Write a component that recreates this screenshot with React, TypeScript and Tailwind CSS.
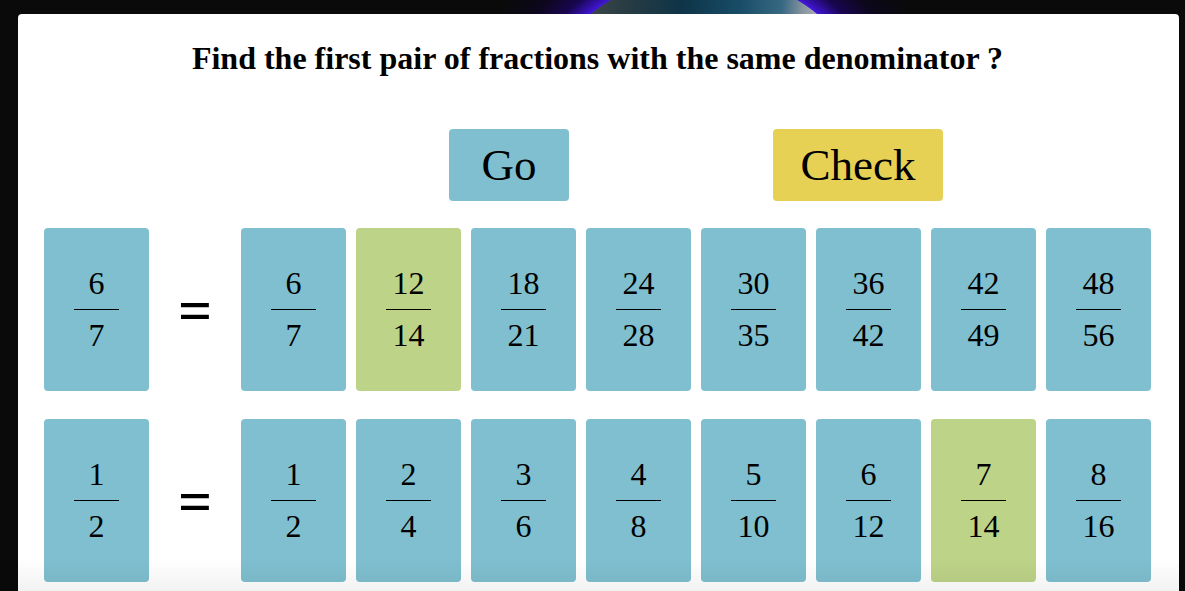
type FractionValue = [number, number];

const rows: { fractions: FractionValue[]; match: number }[] = [
  { fractions: [[6, 7], [12, 14], [18, 21], [24, 28], [30, 35], [36, 42], [42, 49], [48, 56]], match: 1 },
  { fractions: [[1, 2], [2, 4], [3, 6], [4, 8], [5, 10], [6, 12], [7, 14], [8, 16]], match: 6 },
];

function Fraction({ value, highlighted = false }: { value: FractionValue; highlighted?: boolean }) {
  return (
    <div
      className={`flex h-[163px] w-[105px] shrink-0 flex-col items-center justify-center rounded text-[32px] leading-[51px] ${
        highlighted ? "bg-[#bdd387]" : "bg-[#7fbfcf]"
      }`}
    >
      <span>{value[0]}</span>
      <span className="h-px w-[45px] bg-black" />
      <span>{value[1]}</span>
    </div>
  );
}

function Planet() {
  return (
    <svg className="absolute inset-x-0 top-0 h-4 w-full" viewBox="0 0 1185 16" preserveAspectRatio="xMidYMin slice" aria-hidden="true">
      <defs>
        <radialGradient id="glow" gradientUnits="userSpaceOnUse" cx="704" cy="154" r="250">
          <stop offset="0.71" stopColor="#4a1af0" />
          <stop offset="0.74" stopColor="#3511b0" />
          <stop offset="0.79" stopColor="#180650" />
          <stop offset="0.88" stopColor="#0c071c" />
          <stop offset="1" stopColor="#0a0a0a" />
        </radialGradient>
        <linearGradient id="surface" gradientUnits="userSpaceOnUse" x1="590" y1="0" x2="818" y2="20">
          <stop offset="0" stopColor="#3c4648" />
          <stop offset="0.18" stopColor="#263b43" />
          <stop offset="0.4" stopColor="#0e3448" />
          <stop offset="0.65" stopColor="#184c66" />
          <stop offset="0.84" stopColor="#386983" />
          <stop offset="0.93" stopColor="#87959f" />
          <stop offset="1" stopColor="#b0b0b8" />
        </linearGradient>
      </defs>
      <rect width="1185" height="16" fill="#0a0a0a" />
      <circle cx="704" cy="154" r="250" fill="url(#glow)" />
      <circle cx="704" cy="154" r="180" fill="url(#surface)" />
    </svg>
  );
}

export default function App() {
  return (
    <div className="relative flex min-h-screen flex-col bg-[#0a0a0a] pt-3.5 pr-1.5 pl-[18px] font-['Liberation_Serif',serif] text-black">
      <Planet />
      <main className="relative grow rounded-t bg-white pt-6 pr-[26px] pb-[9px] pl-6">
        <h1 className="text-center text-[32px] leading-10 font-bold">
          Find the first pair of fractions with the same denominator ?
        </h1>
        <div className="mt-[51px] flex justify-center gap-[204px] pl-[197px] text-[45px] leading-[72px]">
          <button type="button" className="w-[120px] rounded bg-[#7fbfcf]">Go</button>
          <button type="button" className="w-[170px] rounded bg-[#e6d155]">Check</button>
        </div>
        <div className="mt-[27px] flex flex-col gap-7">
          {rows.map(({ fractions, match }) => (
            <div key={fractions[0].join("/")} className="flex items-center justify-center">
              <Fraction value={fractions[0]} />
              <span className="w-[92px] shrink-0 text-center text-[60px] leading-none font-bold">=</span>
              <div className="flex gap-2.5">
                {fractions.map((value, index) => (
                  <Fraction key={value[0]} value={value} highlighted={index === match} />
                ))}
              </div>
            </div>
          ))}
        </div>
      </main>
      <div className="pointer-events-none fixed inset-x-0 bottom-0 h-8 bg-linear-to-t from-black/5 to-transparent" />
    </div>
  );
}
